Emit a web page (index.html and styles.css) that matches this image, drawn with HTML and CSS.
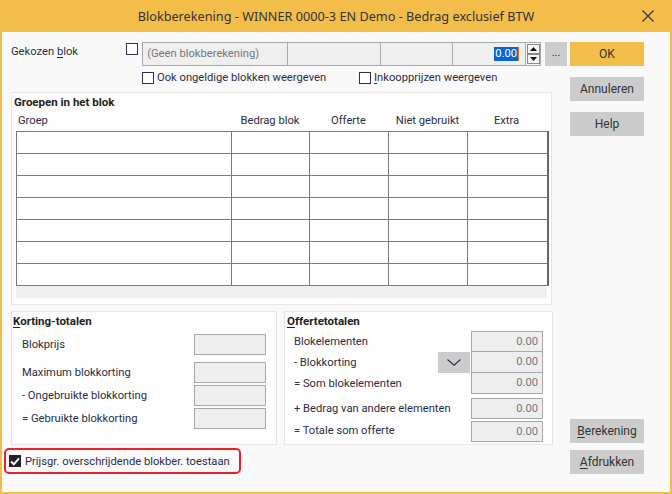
FILE: index.html
```html
<!DOCTYPE html>
<html>
<head>
<meta charset="utf-8">
<link rel="stylesheet" href="styles.css">
</head>
<body>
<div class="window">
  <div class="titlebar">
    <span class="title">Blokberekening - WINNER 0000-3 EN Demo - Bedrag exclusief BTW</span>
    <svg class="close" width="12" height="12" viewBox="0 0 12 12"><path d="M0.5 0.5L11.5 11.5M11.5 0.5L0.5 11.5" stroke="#333" stroke-width="1.1" fill="none"/></svg>
  </div>
  <div class="content">
    <div class="main">
      <div class="row-top">
        <span class="lbl-gekozen">Gekozen <u>b</u>lok</span>
        <span class="cb cb-top"></span>
        <div class="fields">
          <div class="fld f1">(Geen blokberekening)</div>
          <div class="fld f2"></div>
          <div class="fld f3"></div>
          <div class="fld f4"><span class="sel">0.00</span><span class="caret"></span></div>
          <div class="spin">
            <div class="spin-btn"><svg width="7" height="4" viewBox="0 0 7 4"><path d="M3.5 0L7 4H0z" fill="#111"/></svg></div>
            <div class="spin-btn"><svg width="7" height="4" viewBox="0 0 7 4"><path d="M0 0H7L3.5 4z" fill="#111"/></svg></div>
          </div>
        </div>
        <div class="dots">...</div>
      </div>
      <div class="row-checks">
        <label class="chk chk1"><span class="cb"></span>Ook ongeldige blokken weergeven</label>
        <label class="chk chk2"><span class="cb"></span><u>I</u>nkoopprijzen weergeven</label>
      </div>
      <div class="box groepen">
        <div class="box-title">Groepen in het blok</div>
        <div class="grid-head">
          <span class="h-groep">Groep</span>
          <span class="h-c">Bedrag blok</span>
          <span class="h-c">Offerte</span>
          <span class="h-c">Niet gebruikt</span>
          <span class="h-c">Extra</span>
        </div>
        <div class="grid-wrap">
          <table class="grid">
            <colgroup><col class="c1"><col class="c2"><col class="c3"><col class="c4"><col class="c5"></colgroup>
            <tr><td></td><td></td><td></td><td></td><td></td></tr>
            <tr><td></td><td></td><td></td><td></td><td></td></tr>
            <tr><td></td><td></td><td></td><td></td><td></td></tr>
            <tr><td></td><td></td><td></td><td></td><td></td></tr>
            <tr><td></td><td></td><td></td><td></td><td></td></tr>
            <tr><td></td><td></td><td></td><td></td><td></td></tr>
            <tr><td></td><td></td><td></td><td></td><td></td></tr>
          </table>
        </div>
      </div>
      <div class="bottom-boxes">
        <div class="box korting">
          <div class="box-title"><u>K</u>orting-totalen</div>
          <div class="k-row k1"><span>Blokprijs</span><div class="val"></div></div>
          <div class="k-row k2"><span>Maximum blokkorting</span><div class="val"></div></div>
          <div class="k-row k3"><span>- Ongebruikte blokkorting</span><div class="val"></div></div>
          <div class="k-row k4"><span>= Gebruikte blokkorting</span><div class="val"></div></div>
        </div>
        <div class="box offerte">
          <div class="box-title"><u>O</u>ffertetotalen</div>
          <div class="o-row o1"><span>Blokelementen</span><div class="val">0.00</div></div>
          <div class="o-row o2"><span>- Blokkorting</span><div class="drop"><svg width="14" height="7" viewBox="0 0 14 7"><path d="M0.5 0.5L7 6.2L13.5 0.5" stroke="#2a2d4a" stroke-width="1.1" fill="none"/></svg></div><div class="val">0.00</div></div>
          <div class="o-row o3"><span>= Som blokelementen</span><div class="val">0.00</div></div>
          <div class="o-row o4"><span>+ Bedrag van andere elementen</span><div class="val">0.00</div></div>
          <div class="o-row o5"><span>= Totale som offerte</span><div class="val">0.00</div></div>
        </div>
      </div>
      <div class="allow">
        <span class="cb checked"><svg width="10" height="9" viewBox="0 0 10 9"><path d="M1 4.5L3.8 7.3L9 1.3" stroke="#fff" stroke-width="2" fill="none"/></svg></span>
        Prijsgr. overschrijdende blokber. toestaan
      </div>
    </div>
    <div class="buttons">
      <div class="btn ok">OK</div>
      <div class="btn">Annuleren</div>
      <div class="btn">Help</div>
      <div class="spacer"></div>
      <div class="btn"><u>B</u>erekening</div>
      <div class="btn btn-last"><u>A</u>fdrukken</div>
    </div>
  </div>
</div>
</body>
</html>
```
FILE: styles.css
```css
* { box-sizing: border-box; }
html, body { margin: 0; padding: 0; }
body {
  font-family: Roboto, "Noto Sans", sans-serif;
  font-size: 11.2px;
  color: #2e2e42;
  background: #f3bd4a;
}
u { text-decoration: underline; text-underline-offset: 2px; }
.window {
  width: 672px;
  height: 494px;
  border: 2px solid #f3bd4a;
  border-top: 0;
  display: flex;
  flex-direction: column;
  background: #f9f9f9;
}
.titlebar {
  height: 32px;
  background: #f3bd4a;
  display: flex;
  align-items: center;
  justify-content: center;
  position: relative;
  flex: none;
}
.title { font-family: "Noto Sans", sans-serif; font-size: 12.7px; color: #333; }
.close { position: absolute; right: 16px; top: 10px; }
.content {
  flex: 1;
  display: flex;
  padding: 10px 26px 18px 9px;
}
.main { width: 556px; display: flex; flex-direction: column; }
.buttons { width: 74px; margin-left: 3px; display: flex; flex-direction: column; }
.btn {
  height: 24px;
  background: #cccccc;
  display: flex;
  align-items: center;
  justify-content: center;
  color: #333;
  margin-bottom: 11px;
  font-size: 12px;
}
.btn.ok { background: #f3bd4a; }
.spacer { flex: 1; }
.buttons .btn:nth-last-child(2) { margin-bottom: 7px; }
.btn-last { margin-bottom: 0; }

.row-top { display: flex; align-items: flex-start; height: 24px; }
.lbl-gekozen { width: 116px; padding-top: 2px; line-height: 16px; }
.cb {
  display: inline-block;
  width: 12px;
  height: 12px;
  border: 1px solid #35304a;
  background: #fff;
  flex: none;
}
.cb-top { margin-top: 1px; }
.fields { display: flex; margin-left: 4px; height: 24px; border: 1px solid #a8a8a8; }
.fld {
  height: 22px;
  background: #efefef;
  border-right: 1px solid #a8a8a8;
  color: #777;
  line-height: 21px;
  padding-left: 4px;
}
.f1 { width: 145px; }
.f2 { width: 93px; }
.f3 { width: 72px; }
.f4 { width: 73px; text-align: right; padding-right: 6px; color: #fff; display: flex; justify-content: flex-end; align-items: center; }
.sel { background: #0a64d6; line-height: 14px; padding: 0 1px; }
.caret { width: 1px; height: 14px; background: #e07a00; }
.spin { width: 14px; display: flex; flex-direction: column; justify-content: space-between; padding: 1px 0 1px 1px; }
.spin-btn { height: 10px; background: #f5f5f5; border: 1px solid #888; display: flex; align-items: center; justify-content: center; }
.dots { width: 22px; height: 24px; background: #cccccc; margin-left: 4px; text-align: center; line-height: 22px; color: #333; }

.row-checks { display: flex; height: 26px; padding-top: 5px; }
.chk { display: flex; align-items: center; height: 14px; line-height: 14px; }
.chk .cb { margin-right: 3px; }
.chk1 { margin-left: 131px; width: 217px; }

.box {
  background: #fdfdfd;
  border: 1px solid #e6e6e6;
}
.box-title { font-weight: bold; font-size: 11.5px; color: #222; line-height: 16px; }
.groepen { width: 541px; height: 213px; padding: 1px 4px 0 4px; }
.groepen .box-title { margin-left: -2px; }
.grid-head { display: flex; height: 20px; align-items: center; }
.grid-head span { display: block; }
.h-groep { width: 215px; padding-left: 2px; }
.h-c { text-align: center; }
.grid-head .h-c:nth-child(2) { width: 78px; }
.grid-head .h-c:nth-child(3) { width: 79px; }
.grid-head .h-c:nth-child(4) { width: 79px; }
.grid-head .h-c:nth-child(5) { width: 79px; }
.grid-wrap { background: #efefef; width: 531px; height: 167px; margin-top: 1px; }
.grid {
  border-collapse: collapse;
  width: 531px;
  table-layout: fixed;
  background: #fff;
  border-right: 2px solid #666;
}
.grid td { border: 1px solid #7a7a7a; height: 22px; padding: 0; }
.c1 { width: 215px; }
.c2 { width: 78px; }
.c3 { width: 79px; }
.c4 { width: 79px; }
.c5 { width: 80px; }

.bottom-boxes { display: flex; margin-top: 6px; height: 134px; }
.korting { width: 266px; padding: 1px 10px 0 1px; }
.offerte { width: 269px; margin-left: 7px; padding: 1px 9px 0 2px; }
.k-row, .o-row { display: flex; align-items: center; }
.k-row span { flex: 1; padding-left: 9px; }
.o-row span { flex: 1; padding-left: 7px; }
.val {
  width: 72px;
  height: 21px;
  background: #eeeeee;
  border: 1px solid #a8a8a8;
  text-align: right;
  padding-right: 4px;
  line-height: 19px;
  color: #777;
}
.k1 { margin-top: 5px; }
.k2 { margin-top: 7px; }
.k3 { margin-top: 2px; }
.k4 { margin-top: 2px; }
.o1 { margin-top: 2px; }
.o2 .val, .o3 .val { border-top: 0; height: 21px; }
.o4 { margin-top: 4px; }
.o5 { margin-top: 2px; }
.o5 span { padding-bottom: 3px; }
.drop { width: 32px; height: 21px; background: #cccccc; display: flex; align-items: center; justify-content: center; margin-right: 1px; }

.allow {
  margin-top: 3px;
  margin-left: -7px;
  width: 237px;
  height: 26px;
  border: 2px solid #e3242b;
  border-radius: 5px;
  display: flex;
  align-items: center;
  padding-left: 3px;
  color: #2e2e42;
  white-space: nowrap;
}
.cb.checked { background: #222; border-color: #222; display: flex; align-items: center; justify-content: center; margin-right: 4px; }
```
